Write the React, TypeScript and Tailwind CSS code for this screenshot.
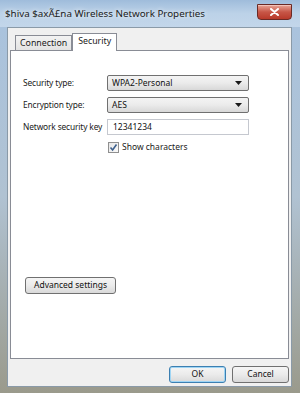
import React from "react";

const FONT = "font-['Segoe_UI','Noto_Sans','Open_Sans',sans-serif]";

function Dropdown({ value }: { value: string }) {
  return (
    <div className="flex items-center justify-between w-[142px] h-[16px] px-[4px] rounded-[2px] border border-[#707070] bg-gradient-to-b from-[#f4f4f4] via-[#ebebeb] to-[#d8d8d8]">
      <span className="text-[8.5px] leading-none text-[#111]">{value}</span>
      <svg width="7" height="4" viewBox="0 0 7 4" className="mr-[2px]">
        <path d="M0 0 H7 L3.5 4 Z" fill="#1a1a1a" />
      </svg>
    </div>
  );
}

function Row({ label, children }: { label: string; children: React.ReactNode }) {
  return (
    <div className="flex items-center">
      <span className="w-[84px] whitespace-nowrap text-[8.4px] tracking-[-0.15px] leading-none text-[#1a1a1a]">{label}</span>
      {children}
    </div>
  );
}

function Button({ label, width, primary }: { label: string; width: string; primary?: boolean }) {
  return (
    <div
      className={`flex items-center justify-center h-[17px] ${width} rounded-[3px] border text-[8.5px] leading-none text-[#111] bg-gradient-to-b from-[#f5f5f5] via-[#ebebeb] to-[#d9d9d9] ${
        primary ? "border-[#3c7fb1] shadow-[inset_0_0_0_1px_#9fd5f4]" : "border-[#707070]"
      }`}
    >
      {label}
    </div>
  );
}

export default function App() {
  return (
    <div className={`${FONT} w-[300px] h-[393px] overflow-hidden flex flex-col bg-gradient-to-b from-[#a9c3df] via-[#b0c2d2] to-[#9a9a8c]`}>
      {/* Title bar */}
      <div className="h-[27px] flex items-start justify-between pl-[5px] pr-[8px] bg-gradient-to-b from-[#9fbcdb] via-[#bcd2e8] to-[#c3d6ea]">
        <span className="mt-[9px] whitespace-nowrap text-[9.8px] leading-none text-[#1b1b1b] [text-shadow:0_0_5px_#ffffff]">
          $hiva $axÃ£na Wireless Network Properties
        </span>
        <div className="mt-[4px] w-[35px] h-[16px] rounded-b-[4px] border border-[#6b2a25] bg-gradient-to-b from-[#e8a597] via-[#c75647] to-[#b8392a] flex items-center justify-center shadow-[inset_0_1px_0_#f3c2b8]">
          <svg width="9" height="8" viewBox="0 0 9 8">
            <path d="M1 1 L8 7 M8 1 L1 7" stroke="#ffffff" strokeWidth="2" strokeLinecap="round" />
          </svg>
        </div>
      </div>

      {/* Client area */}
      <div className="flex-1 flex mx-[7px] mr-[8px] mb-[6px] border border-[#8a9aa8]">
        <div className="flex-1 flex flex-col bg-[#f0f0f0] px-[2px] pt-[4px]">
          {/* Tabs */}
          <div className="flex items-end pl-[5px] h-[18px]">
            <div className="h-[15px] px-[4px] flex items-center border border-b-0 border-[#898c95] bg-gradient-to-b from-[#f3f3f3] to-[#e3e3e3] text-[8.8px] leading-none text-[#1a1a1a]">
              Connection
            </div>
            <div className="h-[18px] -mb-[1px] px-[5px] pb-[3px] flex items-center border border-b-0 border-[#898c95] bg-white text-[8.8px] leading-none text-[#1a1a1a] relative z-10">
              Security
            </div>
          </div>

          {/* Panel */}
          <div className="h-[309px] border border-[#898c95] bg-white flex flex-col pl-[12px] pt-[24px]">
            <div className="flex flex-col gap-[6px]">
              <Row label="Security type:">
                <Dropdown value="WPA2-Personal" />
              </Row>
              <Row label="Encryption type:">
                <Dropdown value="AES" />
              </Row>
              <Row label="Network security key">
                <div className="w-[142px] h-[16px] border border-[#c5c8cf] bg-white flex items-center px-[5px] text-[8.5px] leading-none text-[#111]">
                  12341234
                </div>
              </Row>
            </div>
            <div className="flex items-center gap-[3px] pl-[85px] mt-[7px]">
              <div className="w-[11px] h-[11px] border border-[#8f8f8f] bg-gradient-to-br from-[#e6e6e6] to-[#fafafa] flex items-center justify-center">
                <svg width="9" height="9" viewBox="0 0 9 9">
                  <path d="M1.5 4.5 L3.6 7 L7.5 1.5" stroke="#3d5f8c" strokeWidth="1.6" fill="none" />
                </svg>
              </div>
              <span className="text-[8.5px] leading-none text-[#1a1a1a]">Show characters</span>
            </div>
            <div className="mt-[124px] pl-[2px]">
              <Button label="Advanced settings" width="w-[91px]" />
            </div>
          </div>

          {/* Bottom buttons */}
          <div className="flex justify-end gap-[6px] mt-[7px] pr-[0px]">
            <Button label="OK" width="w-[57px]" primary />
            <Button label="Cancel" width="w-[57px]" />
          </div>
        </div>
      </div>
    </div>
  );
}
